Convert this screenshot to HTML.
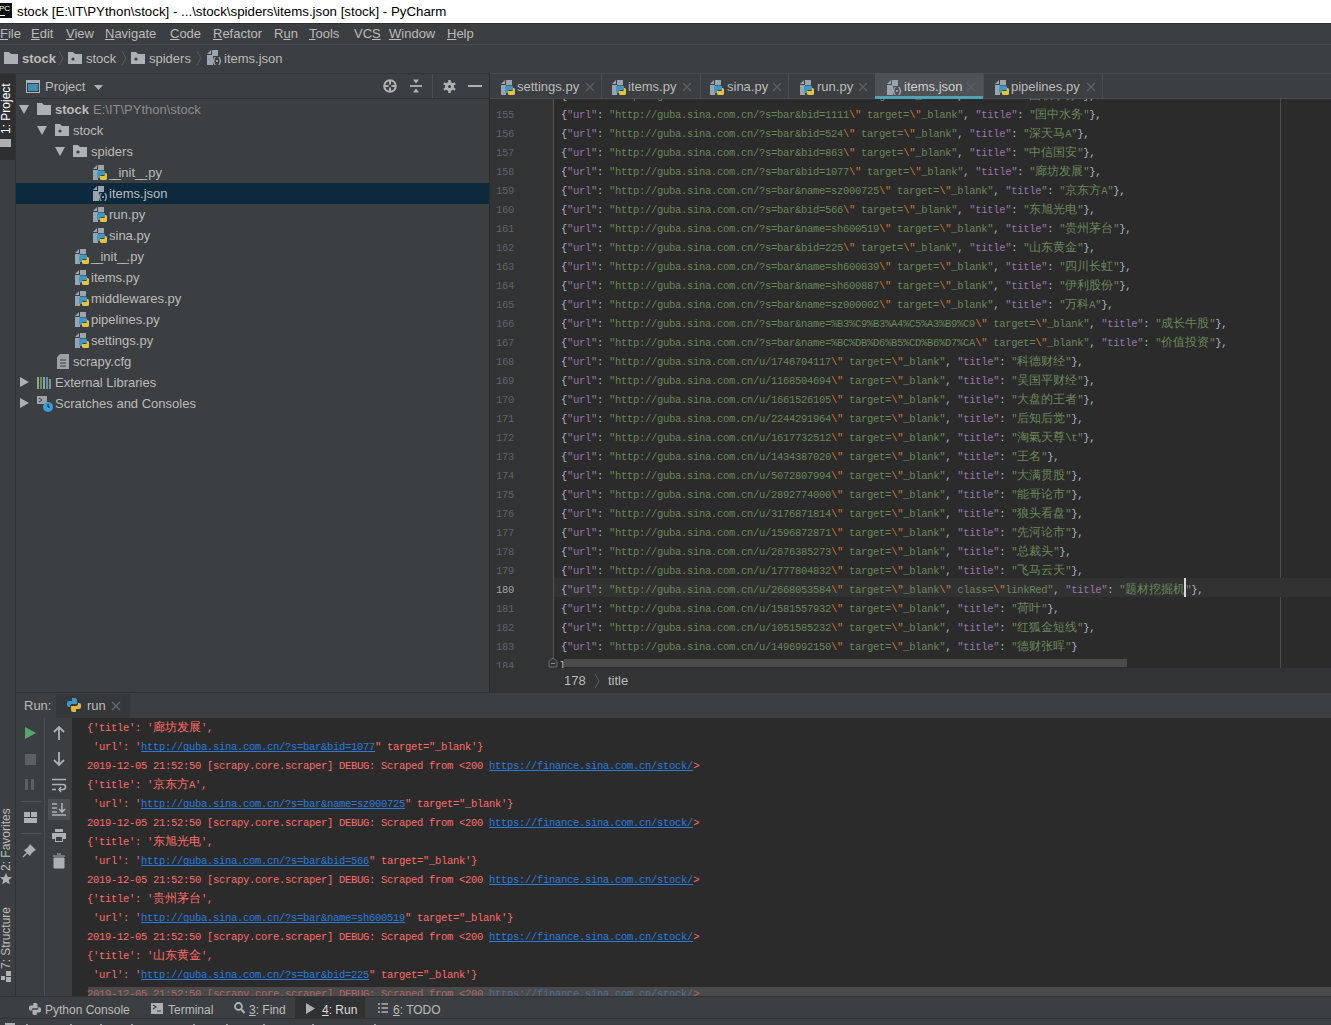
<!DOCTYPE html><html><head><meta charset="utf-8"><style>
*{margin:0;padding:0;box-sizing:border-box}
html,body{width:1331px;height:1025px;overflow:hidden;background:#3c3f41;font-family:"Liberation Sans",sans-serif;color:#bbbbbb}
.a{position:absolute}
.ui{font-size:13px;white-space:nowrap;line-height:16px}
.code{font-family:"Liberation Mono",monospace;font-size:10.5px;letter-spacing:-0.3px;white-space:pre;line-height:19px;position:absolute}
.k{color:#9876aa}.s{color:#6a8759}.e{color:#cc7832}.p{color:#a9b7c6}
.r{color:#ff6b68}.lnk{color:#287bde;text-decoration:underline;text-decoration-skip-ink:none}
.ln{font-family:"Liberation Mono",monospace;font-size:10.5px;letter-spacing:-0.3px;color:#606366;position:absolute;line-height:19px;white-space:pre}
u{text-decoration:underline}
.cj{display:inline-block;width:12px;letter-spacing:0;font-size:12px;text-align:center;line-height:19px;vertical-align:top}
svg{position:absolute;overflow:visible}
</style></head><body>
<div class="a" style="left:0px;top:0px;width:1331px;height:23px;background:#ffffff;"></div>
<div class="a" style="left:0px;top:3px;width:12px;height:15px;background:#0a1410;"></div>
<div class="a" style="left:0px;top:15px;width:5px;height:1px;background:#ffffff;"></div>
<div class="a" style="left:-1px;top:5px;font:8px/8px 'Liberation Sans';color:#fff">PC</div>
<div class="a ui" style="left:17px;top:4px;color:#000;font-size:13.3px">stock [E:\IT\PYthon\stock] - ...\stock\spiders\items.json [stock] - PyCharm</div>
<div class="a" style="left:0px;top:23px;width:1331px;height:21px;background:#3c3f41;"></div>
<div class="a" style="left:0px;top:23px;width:1331px;height:1px;background:#2e3032;"></div>
<div class="a" style="left:0px;top:41px;width:1331px;height:1px;background:#393b3d;"></div>
<div class="a ui" style="left:0px;top:26px;"><u>F</u>ile</div>
<div class="a ui" style="left:31px;top:26px;"><u>E</u>dit</div>
<div class="a ui" style="left:66px;top:26px;"><u>V</u>iew</div>
<div class="a ui" style="left:105px;top:26px;"><u>N</u>avigate</div>
<div class="a ui" style="left:170px;top:26px;"><u>C</u>ode</div>
<div class="a ui" style="left:213px;top:26px;"><u>R</u>efactor</div>
<div class="a ui" style="left:274px;top:26px;">R<u>u</u>n</div>
<div class="a ui" style="left:309px;top:26px;"><u>T</u>ools</div>
<div class="a ui" style="left:354px;top:26px;">VC<u>S</u></div>
<div class="a ui" style="left:389px;top:26px;"><u>W</u>indow</div>
<div class="a ui" style="left:447px;top:26px;"><u>H</u>elp</div>
<div class="a" style="left:0px;top:44px;width:1331px;height:1px;background:#4a4d4f;"></div>
<div class="a" style="left:0px;top:45px;width:1331px;height:27px;background:#3c3f41;"></div>
<svg style="left:4px;top:52px" width="14" height="12" viewBox="0 0 14 12"><path d="M0 0h5l2 2h7v10H0z" fill="#aeb1b3"/></svg>
<div class="a ui" style="left:22px;top:51px;"><b>stock</b></div>
<svg style="left:59px;top:51px" width="5" height="14" viewBox="0 0 5 14"><path d="M0 0l4 7-4 7" fill="none" stroke="#5a5d5f" stroke-width="1"/></svg>
<svg style="left:68px;top:52px" width="14" height="12" viewBox="0 0 14 12"><path d="M0 0h5l2 2h7v10H0z" fill="#aeb1b3"/><circle cx="5" cy="7" r="1.6" fill="#3c3f41"/></svg>
<div class="a ui" style="left:86px;top:51px;">stock</div>
<svg style="left:122px;top:51px" width="5" height="14" viewBox="0 0 5 14"><path d="M0 0l4 7-4 7" fill="none" stroke="#5a5d5f" stroke-width="1"/></svg>
<svg style="left:131px;top:52px" width="14" height="12" viewBox="0 0 14 12"><path d="M0 0h5l2 2h7v10H0z" fill="#aeb1b3"/><circle cx="5" cy="7" r="1.6" fill="#3c3f41"/></svg>
<div class="a ui" style="left:149px;top:51px;">spiders</div>
<svg style="left:197px;top:51px" width="5" height="14" viewBox="0 0 5 14"><path d="M0 0l4 7-4 7" fill="none" stroke="#5a5d5f" stroke-width="1"/></svg>
<svg style="left:207px;top:50px" width="14" height="15" viewBox="0 0 14 15"><path d="M0 4L4 0v4z" fill="#9aa4ad"/><path d="M5 0h6v6H6v9H0V5h5z" fill="#9aa4ad"/><path d="M8.5 7.5q-1.5 0-1.5 1.5v1q0 1-1 1 1 0 1 1v1q0 1.5 1.5 1.5M11.5 7.5q1.5 0 1.5 1.5v1q0 1 1 1-1 0-1 1v1q0 1.5-1.5 1.5" fill="none" stroke="#afb4b8" stroke-width="1.2"/><circle cx="10" cy="11" r="1" fill="#afb4b8"/></svg>
<div class="a ui" style="left:224px;top:51px;">items.json</div>
<div class="a" style="left:0px;top:73px;width:16px;height:925px;background:#3c3f41;"></div>
<div class="a" style="left:15px;top:73px;width:1px;height:925px;background:#323232;"></div>
<div class="a" style="left:0px;top:73px;width:15px;height:87px;background:#2d2f31;"></div>
<div class="a ui" style="left:-26px;top:94px;width:64px;transform:rotate(-90deg);font-size:12px;color:#ffffff">1: Project</div>
<div class="a" style="left:0px;top:139px;width:11px;height:8px;background:#aeb1b3;"></div>
<div class="a ui" style="left:-32px;top:825px;width:76px;transform:rotate(-90deg);font-size:12px">2: Favorites</div>
<svg style="left:0;top:873px" width="12" height="12" viewBox="0 0 12 12"><path d="M6 0l1.8 3.9 4.2.4-3.2 2.8 1 4.1L6 9 2.2 11.2l1-4.1L0 4.3l4.2-.4z" fill="#aeb1b3"/></svg>
<div class="a ui" style="left:-32px;top:923px;width:76px;transform:rotate(-90deg);font-size:12px">7: Structure</div>
<div class="a" style="left:1px;top:976px;width:4px;height:4px;background:#aeb1b3;"></div>
<div class="a" style="left:6px;top:971px;width:5px;height:5px;background:#aeb1b3;"></div>
<div class="a" style="left:6px;top:977px;width:5px;height:5px;background:#aeb1b3;"></div>
<div class="a" style="left:16px;top:73px;width:473px;height:620px;background:#3c3f41;"></div>
<div class="a" style="left:0px;top:73px;width:489px;height:1px;background:#333537;"></div>
<div class="a" style="left:16px;top:98px;width:473px;height:1px;background:#323232;"></div>
<svg style="left:26px;top:80px" width="14" height="13" viewBox="0 0 14 13"><rect x="0.5" y="0.5" width="13" height="12" fill="none" stroke="#a9b4bc"/><rect x="1" y="1" width="12" height="2" fill="#a9b4bc"/><rect x="2" y="4" width="10" height="7" fill="#3d8db5"/></svg>
<div class="a ui" style="left:45px;top:79px;">Project</div>
<svg style="left:94px;top:85px" width="9" height="5" viewBox="0 0 9 5"><path d="M0 0h9L4.5 5z" fill="#afb1b3"/></svg>
<svg style="left:383px;top:79px" width="14" height="14" viewBox="0 0 14 14"><circle cx="7" cy="7" r="5.8" fill="none" stroke="#afb1b3" stroke-width="2"/><path d="M7 1.5v4M7 8.5v4M1.5 7h4M8.5 7h4" stroke="#afb1b3" stroke-width="2"/></svg>
<svg style="left:410px;top:79px" width="12" height="14" viewBox="0 0 12 14"><path d="M3 0.5h6L6 4.5z M3 13.5h6L6 9.5z" fill="#afb1b3"/><path d="M0 7h12" stroke="#afb1b3" stroke-width="1.8"/></svg>
<div class="a" style="left:432px;top:74px;width:1px;height:24px;background:#4b4e50;"></div>
<svg style="left:442.5px;top:79.5px" width="13" height="13" viewBox="0 0 13 13"><rect x="5.25" y="0" width="2.5" height="3.5" fill="#afb1b3" transform="rotate(0 6.5 6.5)"/><rect x="5.25" y="0" width="2.5" height="3.5" fill="#afb1b3" transform="rotate(60 6.5 6.5)"/><rect x="5.25" y="0" width="2.5" height="3.5" fill="#afb1b3" transform="rotate(120 6.5 6.5)"/><rect x="5.25" y="0" width="2.5" height="3.5" fill="#afb1b3" transform="rotate(180 6.5 6.5)"/><rect x="5.25" y="0" width="2.5" height="3.5" fill="#afb1b3" transform="rotate(240 6.5 6.5)"/><rect x="5.25" y="0" width="2.5" height="3.5" fill="#afb1b3" transform="rotate(300 6.5 6.5)"/><circle cx="6.5" cy="6.5" r="4.5" fill="#afb1b3"/><circle cx="6.5" cy="6.5" r="1.6" fill="#3c3f41"/></svg>
<div class="a" style="left:468px;top:85px;width:14px;height:2px;background:#afb1b3;"></div>
<div class="a" style="left:16px;top:183px;width:473px;height:21px;background:#0d293e;"></div>
<svg style="left:19px;top:105px" width="10" height="9" viewBox="0 0 10 9"><path d="M0 0h10L5 9z" fill="#afb1b3"/></svg>
<svg style="left:37px;top:103px" width="14" height="12" viewBox="0 0 14 12"><path d="M0 0h5l2 2h7v10H0z" fill="#aeb1b3"/></svg>
<div class="a ui" style="left:55px;top:102px;"><b>stock</b></div>
<div class="a ui" style="left:93px;top:102px;color:#8c8c8c">E:\IT\PYthon\stock</div>
<svg style="left:37px;top:126px" width="10" height="9" viewBox="0 0 10 9"><path d="M0 0h10L5 9z" fill="#afb1b3"/></svg>
<svg style="left:55px;top:124px" width="14" height="12" viewBox="0 0 14 12"><path d="M0 0h5l2 2h7v10H0z" fill="#aeb1b3"/><circle cx="5" cy="7" r="1.6" fill="#3c3f41"/></svg>
<div class="a ui" style="left:73px;top:123px;">stock</div>
<svg style="left:55px;top:147px" width="10" height="9" viewBox="0 0 10 9"><path d="M0 0h10L5 9z" fill="#afb1b3"/></svg>
<svg style="left:73px;top:145px" width="14" height="12" viewBox="0 0 14 12"><path d="M0 0h5l2 2h7v10H0z" fill="#aeb1b3"/><circle cx="5" cy="7" r="1.6" fill="#3c3f41"/></svg>
<div class="a ui" style="left:91px;top:144px;">spiders</div>
<svg style="left:93px;top:165px" width="14" height="15" viewBox="0 0 14 15"><path d="M0 4L4 0v4z" fill="#9aa4ad"/><path d="M5 0h6v5H5v10H0V5h5z" fill="#9aa4ad"/><path d="M6 5.5h4.5A1.5 1.5 0 0 1 12 7v3H8.5A1.5 1.5 0 0 0 7 11.5V13H5.5A1.5 1.5 0 0 1 4 11.5V7.5a2 2 0 0 1 2-2z" fill="#3f97c6"/><path d="M12.5 15H8.5A1.5 1.5 0 0 1 7 13.5V11h3.5A1.5 1.5 0 0 0 12 9.5V8h.5A1.5 1.5 0 0 1 14 9.5v4a1.5 1.5 0 0 1-1.5 1.5z" fill="#e5c33e"/></svg>
<div class="a ui" style="left:109px;top:165px;"><span style="letter-spacing:-2.5px">_</span><span style="letter-spacing:-2.5px">_</span>init<span style="letter-spacing:-2.5px">_</span><span style="letter-spacing:-2.5px">_</span>.py</div>
<svg style="left:93px;top:186px" width="14" height="15" viewBox="0 0 14 15"><path d="M0 4L4 0v4z" fill="#9aa4ad"/><path d="M5 0h6v6H6v9H0V5h5z" fill="#9aa4ad"/><path d="M8.5 7.5q-1.5 0-1.5 1.5v1q0 1-1 1 1 0 1 1v1q0 1.5 1.5 1.5M11.5 7.5q1.5 0 1.5 1.5v1q0 1 1 1-1 0-1 1v1q0 1.5-1.5 1.5" fill="none" stroke="#afb4b8" stroke-width="1.2"/><circle cx="10" cy="11" r="1" fill="#afb4b8"/></svg>
<div class="a ui" style="left:109px;top:186px;">items.json</div>
<svg style="left:93px;top:207px" width="14" height="15" viewBox="0 0 14 15"><path d="M0 4L4 0v4z" fill="#9aa4ad"/><path d="M5 0h6v5H5v10H0V5h5z" fill="#9aa4ad"/><path d="M6 5.5h4.5A1.5 1.5 0 0 1 12 7v3H8.5A1.5 1.5 0 0 0 7 11.5V13H5.5A1.5 1.5 0 0 1 4 11.5V7.5a2 2 0 0 1 2-2z" fill="#3f97c6"/><path d="M12.5 15H8.5A1.5 1.5 0 0 1 7 13.5V11h3.5A1.5 1.5 0 0 0 12 9.5V8h.5A1.5 1.5 0 0 1 14 9.5v4a1.5 1.5 0 0 1-1.5 1.5z" fill="#e5c33e"/></svg>
<div class="a ui" style="left:109px;top:207px;">run.py</div>
<svg style="left:93px;top:228px" width="14" height="15" viewBox="0 0 14 15"><path d="M0 4L4 0v4z" fill="#9aa4ad"/><path d="M5 0h6v5H5v10H0V5h5z" fill="#9aa4ad"/><path d="M6 5.5h4.5A1.5 1.5 0 0 1 12 7v3H8.5A1.5 1.5 0 0 0 7 11.5V13H5.5A1.5 1.5 0 0 1 4 11.5V7.5a2 2 0 0 1 2-2z" fill="#3f97c6"/><path d="M12.5 15H8.5A1.5 1.5 0 0 1 7 13.5V11h3.5A1.5 1.5 0 0 0 12 9.5V8h.5A1.5 1.5 0 0 1 14 9.5v4a1.5 1.5 0 0 1-1.5 1.5z" fill="#e5c33e"/></svg>
<div class="a ui" style="left:109px;top:228px;">sina.py</div>
<svg style="left:75px;top:249px" width="14" height="15" viewBox="0 0 14 15"><path d="M0 4L4 0v4z" fill="#9aa4ad"/><path d="M5 0h6v5H5v10H0V5h5z" fill="#9aa4ad"/><path d="M6 5.5h4.5A1.5 1.5 0 0 1 12 7v3H8.5A1.5 1.5 0 0 0 7 11.5V13H5.5A1.5 1.5 0 0 1 4 11.5V7.5a2 2 0 0 1 2-2z" fill="#3f97c6"/><path d="M12.5 15H8.5A1.5 1.5 0 0 1 7 13.5V11h3.5A1.5 1.5 0 0 0 12 9.5V8h.5A1.5 1.5 0 0 1 14 9.5v4a1.5 1.5 0 0 1-1.5 1.5z" fill="#e5c33e"/></svg>
<div class="a ui" style="left:91px;top:249px;"><span style="letter-spacing:-2.5px">_</span><span style="letter-spacing:-2.5px">_</span>init<span style="letter-spacing:-2.5px">_</span><span style="letter-spacing:-2.5px">_</span>.py</div>
<svg style="left:75px;top:270px" width="14" height="15" viewBox="0 0 14 15"><path d="M0 4L4 0v4z" fill="#9aa4ad"/><path d="M5 0h6v5H5v10H0V5h5z" fill="#9aa4ad"/><path d="M6 5.5h4.5A1.5 1.5 0 0 1 12 7v3H8.5A1.5 1.5 0 0 0 7 11.5V13H5.5A1.5 1.5 0 0 1 4 11.5V7.5a2 2 0 0 1 2-2z" fill="#3f97c6"/><path d="M12.5 15H8.5A1.5 1.5 0 0 1 7 13.5V11h3.5A1.5 1.5 0 0 0 12 9.5V8h.5A1.5 1.5 0 0 1 14 9.5v4a1.5 1.5 0 0 1-1.5 1.5z" fill="#e5c33e"/></svg>
<div class="a ui" style="left:91px;top:270px;">items.py</div>
<svg style="left:75px;top:291px" width="14" height="15" viewBox="0 0 14 15"><path d="M0 4L4 0v4z" fill="#9aa4ad"/><path d="M5 0h6v5H5v10H0V5h5z" fill="#9aa4ad"/><path d="M6 5.5h4.5A1.5 1.5 0 0 1 12 7v3H8.5A1.5 1.5 0 0 0 7 11.5V13H5.5A1.5 1.5 0 0 1 4 11.5V7.5a2 2 0 0 1 2-2z" fill="#3f97c6"/><path d="M12.5 15H8.5A1.5 1.5 0 0 1 7 13.5V11h3.5A1.5 1.5 0 0 0 12 9.5V8h.5A1.5 1.5 0 0 1 14 9.5v4a1.5 1.5 0 0 1-1.5 1.5z" fill="#e5c33e"/></svg>
<div class="a ui" style="left:91px;top:291px;">middlewares.py</div>
<svg style="left:75px;top:312px" width="14" height="15" viewBox="0 0 14 15"><path d="M0 4L4 0v4z" fill="#9aa4ad"/><path d="M5 0h6v5H5v10H0V5h5z" fill="#9aa4ad"/><path d="M6 5.5h4.5A1.5 1.5 0 0 1 12 7v3H8.5A1.5 1.5 0 0 0 7 11.5V13H5.5A1.5 1.5 0 0 1 4 11.5V7.5a2 2 0 0 1 2-2z" fill="#3f97c6"/><path d="M12.5 15H8.5A1.5 1.5 0 0 1 7 13.5V11h3.5A1.5 1.5 0 0 0 12 9.5V8h.5A1.5 1.5 0 0 1 14 9.5v4a1.5 1.5 0 0 1-1.5 1.5z" fill="#e5c33e"/></svg>
<div class="a ui" style="left:91px;top:312px;">pipelines.py</div>
<svg style="left:75px;top:333px" width="14" height="15" viewBox="0 0 14 15"><path d="M0 4L4 0v4z" fill="#9aa4ad"/><path d="M5 0h6v5H5v10H0V5h5z" fill="#9aa4ad"/><path d="M6 5.5h4.5A1.5 1.5 0 0 1 12 7v3H8.5A1.5 1.5 0 0 0 7 11.5V13H5.5A1.5 1.5 0 0 1 4 11.5V7.5a2 2 0 0 1 2-2z" fill="#3f97c6"/><path d="M12.5 15H8.5A1.5 1.5 0 0 1 7 13.5V11h3.5A1.5 1.5 0 0 0 12 9.5V8h.5A1.5 1.5 0 0 1 14 9.5v4a1.5 1.5 0 0 1-1.5 1.5z" fill="#e5c33e"/></svg>
<div class="a ui" style="left:91px;top:333px;">settings.py</div>
<svg style="left:57px;top:354px" width="12" height="15" viewBox="0 0 12 15"><path d="M0 3l3-3h9v15H0z" fill="#9da0a4"/><path d="M3 6h6M3 9h6M3 12h6" stroke="#3c3f41" stroke-width="1"/></svg>
<div class="a ui" style="left:73px;top:354px;">scrapy.cfg</div>
<svg style="left:20px;top:377px" width="9" height="10" viewBox="0 0 9 10"><path d="M0 0l9 5-9 5z" fill="#afb1b3"/></svg>
<svg style="left:37px;top:377px" width="14" height="12" viewBox="0 0 14 12"><path d="M1 0v12" stroke="#b5b5b5" stroke-width="1.6"/><path d="M4 0v12" stroke="#62b543" stroke-width="1.6"/><path d="M7 0v12" stroke="#c4a9c4" stroke-width="1.6"/><path d="M10 0v12" stroke="#40b6e0" stroke-width="1.6"/><path d="M13 2v10" stroke="#aeb1b3" stroke-width="1.4"/></svg>
<div class="a ui" style="left:55px;top:375px;">External Libraries</div>
<svg style="left:20px;top:398px" width="9" height="10" viewBox="0 0 9 10"><path d="M0 0l9 5-9 5z" fill="#afb1b3"/></svg>
<svg style="left:37px;top:396px" width="16" height="16" viewBox="0 0 16 16"><path d="M0 0h10v8H0z" fill="#9da0a4"/><path d="M2 2l3 2-3 2" stroke="#3c3f41" fill="none"/><circle cx="11" cy="11" r="5" fill="#3d9bd8"/><path d="M11 8v3h2" stroke="#1e1e1e" fill="none"/></svg>
<div class="a ui" style="left:55px;top:396px;">Scratches and Consoles</div>
<div class="a" style="left:489px;top:73px;width:1px;height:620px;background:#2b2b2b;"></div>
<div class="a" style="left:490px;top:73px;width:841px;height:26px;background:#3c3f41;"></div>
<div class="a" style="left:490px;top:73px;width:841px;height:1px;background:#47494b;"></div>
<div class="a" style="left:490px;top:98px;width:841px;height:1px;background:#4a4c4e;"></div>
<div class="a" style="left:601px;top:74px;width:1px;height:24px;background:#4a4c4e;"></div>
<svg style="left:501px;top:80px" width="14" height="15" viewBox="0 0 14 15"><path d="M0 4L4 0v4z" fill="#9aa4ad"/><path d="M5 0h6v5H5v10H0V5h5z" fill="#9aa4ad"/><path d="M6 5.5h4.5A1.5 1.5 0 0 1 12 7v3H8.5A1.5 1.5 0 0 0 7 11.5V13H5.5A1.5 1.5 0 0 1 4 11.5V7.5a2 2 0 0 1 2-2z" fill="#3f97c6"/><path d="M12.5 15H8.5A1.5 1.5 0 0 1 7 13.5V11h3.5A1.5 1.5 0 0 0 12 9.5V8h.5A1.5 1.5 0 0 1 14 9.5v4a1.5 1.5 0 0 1-1.5 1.5z" fill="#e5c33e"/></svg>
<div class="a ui" style="left:517px;top:79px;color:#bbbbbb">settings.py</div>
<svg style="left:586px;top:83px" width="8" height="8" viewBox="0 0 8 8"><path d="M0 0l8 8M8 0L0 8" stroke="#5d6062" stroke-width="1.3"/></svg>
<div class="a" style="left:700px;top:74px;width:1px;height:24px;background:#4a4c4e;"></div>
<svg style="left:612px;top:80px" width="14" height="15" viewBox="0 0 14 15"><path d="M0 4L4 0v4z" fill="#9aa4ad"/><path d="M5 0h6v5H5v10H0V5h5z" fill="#9aa4ad"/><path d="M6 5.5h4.5A1.5 1.5 0 0 1 12 7v3H8.5A1.5 1.5 0 0 0 7 11.5V13H5.5A1.5 1.5 0 0 1 4 11.5V7.5a2 2 0 0 1 2-2z" fill="#3f97c6"/><path d="M12.5 15H8.5A1.5 1.5 0 0 1 7 13.5V11h3.5A1.5 1.5 0 0 0 12 9.5V8h.5A1.5 1.5 0 0 1 14 9.5v4a1.5 1.5 0 0 1-1.5 1.5z" fill="#e5c33e"/></svg>
<div class="a ui" style="left:628px;top:79px;color:#bbbbbb">items.py</div>
<svg style="left:683px;top:83px" width="8" height="8" viewBox="0 0 8 8"><path d="M0 0l8 8M8 0L0 8" stroke="#5d6062" stroke-width="1.3"/></svg>
<div class="a" style="left:788px;top:74px;width:1px;height:24px;background:#4a4c4e;"></div>
<svg style="left:710px;top:80px" width="14" height="15" viewBox="0 0 14 15"><path d="M0 4L4 0v4z" fill="#9aa4ad"/><path d="M5 0h6v5H5v10H0V5h5z" fill="#9aa4ad"/><path d="M6 5.5h4.5A1.5 1.5 0 0 1 12 7v3H8.5A1.5 1.5 0 0 0 7 11.5V13H5.5A1.5 1.5 0 0 1 4 11.5V7.5a2 2 0 0 1 2-2z" fill="#3f97c6"/><path d="M12.5 15H8.5A1.5 1.5 0 0 1 7 13.5V11h3.5A1.5 1.5 0 0 0 12 9.5V8h.5A1.5 1.5 0 0 1 14 9.5v4a1.5 1.5 0 0 1-1.5 1.5z" fill="#e5c33e"/></svg>
<div class="a ui" style="left:727px;top:79px;color:#bbbbbb">sina.py</div>
<svg style="left:773px;top:83px" width="8" height="8" viewBox="0 0 8 8"><path d="M0 0l8 8M8 0L0 8" stroke="#5d6062" stroke-width="1.3"/></svg>
<div class="a" style="left:875px;top:74px;width:1px;height:24px;background:#4a4c4e;"></div>
<svg style="left:800px;top:80px" width="14" height="15" viewBox="0 0 14 15"><path d="M0 4L4 0v4z" fill="#9aa4ad"/><path d="M5 0h6v5H5v10H0V5h5z" fill="#9aa4ad"/><path d="M6 5.5h4.5A1.5 1.5 0 0 1 12 7v3H8.5A1.5 1.5 0 0 0 7 11.5V13H5.5A1.5 1.5 0 0 1 4 11.5V7.5a2 2 0 0 1 2-2z" fill="#3f97c6"/><path d="M12.5 15H8.5A1.5 1.5 0 0 1 7 13.5V11h3.5A1.5 1.5 0 0 0 12 9.5V8h.5A1.5 1.5 0 0 1 14 9.5v4a1.5 1.5 0 0 1-1.5 1.5z" fill="#e5c33e"/></svg>
<div class="a ui" style="left:817px;top:79px;color:#bbbbbb">run.py</div>
<svg style="left:859px;top:83px" width="8" height="8" viewBox="0 0 8 8"><path d="M0 0l8 8M8 0L0 8" stroke="#5d6062" stroke-width="1.3"/></svg>
<div class="a" style="left:875px;top:73px;width:108px;height:26px;background:#4e5254;"></div>
<div class="a" style="left:875px;top:96px;width:108px;height:3px;background:#4ea3b6;"></div>
<div class="a" style="left:983px;top:74px;width:1px;height:24px;background:#4a4c4e;"></div>
<svg style="left:887px;top:80px" width="14" height="15" viewBox="0 0 14 15"><path d="M0 4L4 0v4z" fill="#9aa4ad"/><path d="M5 0h6v6H6v9H0V5h5z" fill="#9aa4ad"/><path d="M8.5 7.5q-1.5 0-1.5 1.5v1q0 1-1 1 1 0 1 1v1q0 1.5 1.5 1.5M11.5 7.5q1.5 0 1.5 1.5v1q0 1 1 1-1 0-1 1v1q0 1.5-1.5 1.5" fill="none" stroke="#afb4b8" stroke-width="1.2"/><circle cx="10" cy="11" r="1" fill="#afb4b8"/></svg>
<div class="a ui" style="left:904px;top:79px;color:#d0d0d0">items.json</div>
<svg style="left:967px;top:83px" width="8" height="8" viewBox="0 0 8 8"><path d="M0 0l8 8M8 0L0 8" stroke="#5d6062" stroke-width="1.3"/></svg>
<div class="a" style="left:1102px;top:74px;width:1px;height:24px;background:#4a4c4e;"></div>
<svg style="left:995px;top:80px" width="14" height="15" viewBox="0 0 14 15"><path d="M0 4L4 0v4z" fill="#9aa4ad"/><path d="M5 0h6v5H5v10H0V5h5z" fill="#9aa4ad"/><path d="M6 5.5h4.5A1.5 1.5 0 0 1 12 7v3H8.5A1.5 1.5 0 0 0 7 11.5V13H5.5A1.5 1.5 0 0 1 4 11.5V7.5a2 2 0 0 1 2-2z" fill="#3f97c6"/><path d="M12.5 15H8.5A1.5 1.5 0 0 1 7 13.5V11h3.5A1.5 1.5 0 0 0 12 9.5V8h.5A1.5 1.5 0 0 1 14 9.5v4a1.5 1.5 0 0 1-1.5 1.5z" fill="#e5c33e"/></svg>
<div class="a ui" style="left:1011px;top:79px;color:#bbbbbb">pipelines.py</div>
<svg style="left:1087px;top:83px" width="8" height="8" viewBox="0 0 8 8"><path d="M0 0l8 8M8 0L0 8" stroke="#5d6062" stroke-width="1.3"/></svg>
<div class="a" style="left:490px;top:99px;width:841px;height:569px;background:#2b2b2b;"></div>
<div class="a" style="left:490px;top:99px;width:63px;height:569px;background:#313335;"></div>
<div class="a" style="left:553px;top:99px;width:1px;height:569px;background:#555555;"></div>
<div class="a" style="left:1280px;top:99px;width:1px;height:569px;background:#4c4c4c;"></div>
<div class="a" style="left:1286px;top:99px;width:1px;height:569px;background:#303030;"></div>
<div class="a" style="left:554px;top:578px;width:777px;height:19px;background:#323232;"></div>
<div class="a" style="left:490px;top:99px;width:841px;height:569px;overflow:hidden">
<div class="ln" style="left:6px;top:-12px;color:#606366">154</div>
<div class="code" style="left:71px;top:-12px"><span class="p">{</span><span class="k">&quot;url&quot;</span><span class="p">: </span><span class="s">&quot;http://guba.sina.com.cn/?s=bar&amp;bid=???</span><span class="e">\&quot;</span><span class="s"> target=</span><span class="e">\&quot;</span><span class="s">_blank&quot;</span><span class="p">, </span><span class="k">&quot;title&quot;</span><span class="p">: </span><span class="s">&quot;<span class="cj">国</span><span class="cj">联</span><span class="cj">水</span><span class="cj">务</span>&quot;</span><span class="p">},</span></div>
<div class="ln" style="left:6px;top:7px;color:#606366">155</div>
<div class="code" style="left:71px;top:7px"><span class="p">{</span><span class="k">&quot;url&quot;</span><span class="p">: </span><span class="s">&quot;http://guba.sina.com.cn/?s=bar&amp;bid=1111</span><span class="e">\&quot;</span><span class="s"> target=</span><span class="e">\&quot;</span><span class="s">_blank&quot;</span><span class="p">, </span><span class="k">&quot;title&quot;</span><span class="p">: </span><span class="s">&quot;<span class="cj">国</span><span class="cj">中</span><span class="cj">水</span><span class="cj">务</span>&quot;</span><span class="p">},</span></div>
<div class="ln" style="left:6px;top:26px;color:#606366">156</div>
<div class="code" style="left:71px;top:26px"><span class="p">{</span><span class="k">&quot;url&quot;</span><span class="p">: </span><span class="s">&quot;http://guba.sina.com.cn/?s=bar&amp;bid=524</span><span class="e">\&quot;</span><span class="s"> target=</span><span class="e">\&quot;</span><span class="s">_blank&quot;</span><span class="p">, </span><span class="k">&quot;title&quot;</span><span class="p">: </span><span class="s">&quot;<span class="cj">深</span><span class="cj">天</span><span class="cj">马</span>A&quot;</span><span class="p">},</span></div>
<div class="ln" style="left:6px;top:45px;color:#606366">157</div>
<div class="code" style="left:71px;top:45px"><span class="p">{</span><span class="k">&quot;url&quot;</span><span class="p">: </span><span class="s">&quot;http://guba.sina.com.cn/?s=bar&amp;bid=863</span><span class="e">\&quot;</span><span class="s"> target=</span><span class="e">\&quot;</span><span class="s">_blank&quot;</span><span class="p">, </span><span class="k">&quot;title&quot;</span><span class="p">: </span><span class="s">&quot;<span class="cj">中</span><span class="cj">信</span><span class="cj">国</span><span class="cj">安</span>&quot;</span><span class="p">},</span></div>
<div class="ln" style="left:6px;top:64px;color:#606366">158</div>
<div class="code" style="left:71px;top:64px"><span class="p">{</span><span class="k">&quot;url&quot;</span><span class="p">: </span><span class="s">&quot;http://guba.sina.com.cn/?s=bar&amp;bid=1077</span><span class="e">\&quot;</span><span class="s"> target=</span><span class="e">\&quot;</span><span class="s">_blank&quot;</span><span class="p">, </span><span class="k">&quot;title&quot;</span><span class="p">: </span><span class="s">&quot;<span class="cj">廊</span><span class="cj">坊</span><span class="cj">发</span><span class="cj">展</span>&quot;</span><span class="p">},</span></div>
<div class="ln" style="left:6px;top:83px;color:#606366">159</div>
<div class="code" style="left:71px;top:83px"><span class="p">{</span><span class="k">&quot;url&quot;</span><span class="p">: </span><span class="s">&quot;http://guba.sina.com.cn/?s=bar&amp;name=sz000725</span><span class="e">\&quot;</span><span class="s"> target=</span><span class="e">\&quot;</span><span class="s">_blank&quot;</span><span class="p">, </span><span class="k">&quot;title&quot;</span><span class="p">: </span><span class="s">&quot;<span class="cj">京</span><span class="cj">东</span><span class="cj">方</span>A&quot;</span><span class="p">},</span></div>
<div class="ln" style="left:6px;top:102px;color:#606366">160</div>
<div class="code" style="left:71px;top:102px"><span class="p">{</span><span class="k">&quot;url&quot;</span><span class="p">: </span><span class="s">&quot;http://guba.sina.com.cn/?s=bar&amp;bid=566</span><span class="e">\&quot;</span><span class="s"> target=</span><span class="e">\&quot;</span><span class="s">_blank&quot;</span><span class="p">, </span><span class="k">&quot;title&quot;</span><span class="p">: </span><span class="s">&quot;<span class="cj">东</span><span class="cj">旭</span><span class="cj">光</span><span class="cj">电</span>&quot;</span><span class="p">},</span></div>
<div class="ln" style="left:6px;top:121px;color:#606366">161</div>
<div class="code" style="left:71px;top:121px"><span class="p">{</span><span class="k">&quot;url&quot;</span><span class="p">: </span><span class="s">&quot;http://guba.sina.com.cn/?s=bar&amp;name=sh600519</span><span class="e">\&quot;</span><span class="s"> target=</span><span class="e">\&quot;</span><span class="s">_blank&quot;</span><span class="p">, </span><span class="k">&quot;title&quot;</span><span class="p">: </span><span class="s">&quot;<span class="cj">贵</span><span class="cj">州</span><span class="cj">茅</span><span class="cj">台</span>&quot;</span><span class="p">},</span></div>
<div class="ln" style="left:6px;top:140px;color:#606366">162</div>
<div class="code" style="left:71px;top:140px"><span class="p">{</span><span class="k">&quot;url&quot;</span><span class="p">: </span><span class="s">&quot;http://guba.sina.com.cn/?s=bar&amp;bid=225</span><span class="e">\&quot;</span><span class="s"> target=</span><span class="e">\&quot;</span><span class="s">_blank&quot;</span><span class="p">, </span><span class="k">&quot;title&quot;</span><span class="p">: </span><span class="s">&quot;<span class="cj">山</span><span class="cj">东</span><span class="cj">黄</span><span class="cj">金</span>&quot;</span><span class="p">},</span></div>
<div class="ln" style="left:6px;top:159px;color:#606366">163</div>
<div class="code" style="left:71px;top:159px"><span class="p">{</span><span class="k">&quot;url&quot;</span><span class="p">: </span><span class="s">&quot;http://guba.sina.com.cn/?s=bar&amp;name=sh600839</span><span class="e">\&quot;</span><span class="s"> target=</span><span class="e">\&quot;</span><span class="s">_blank&quot;</span><span class="p">, </span><span class="k">&quot;title&quot;</span><span class="p">: </span><span class="s">&quot;<span class="cj">四</span><span class="cj">川</span><span class="cj">长</span><span class="cj">虹</span>&quot;</span><span class="p">},</span></div>
<div class="ln" style="left:6px;top:178px;color:#606366">164</div>
<div class="code" style="left:71px;top:178px"><span class="p">{</span><span class="k">&quot;url&quot;</span><span class="p">: </span><span class="s">&quot;http://guba.sina.com.cn/?s=bar&amp;name=sh600887</span><span class="e">\&quot;</span><span class="s"> target=</span><span class="e">\&quot;</span><span class="s">_blank&quot;</span><span class="p">, </span><span class="k">&quot;title&quot;</span><span class="p">: </span><span class="s">&quot;<span class="cj">伊</span><span class="cj">利</span><span class="cj">股</span><span class="cj">份</span>&quot;</span><span class="p">},</span></div>
<div class="ln" style="left:6px;top:197px;color:#606366">165</div>
<div class="code" style="left:71px;top:197px"><span class="p">{</span><span class="k">&quot;url&quot;</span><span class="p">: </span><span class="s">&quot;http://guba.sina.com.cn/?s=bar&amp;name=sz000002</span><span class="e">\&quot;</span><span class="s"> target=</span><span class="e">\&quot;</span><span class="s">_blank&quot;</span><span class="p">, </span><span class="k">&quot;title&quot;</span><span class="p">: </span><span class="s">&quot;<span class="cj">万</span><span class="cj">科</span>A&quot;</span><span class="p">},</span></div>
<div class="ln" style="left:6px;top:216px;color:#606366">166</div>
<div class="code" style="left:71px;top:216px"><span class="p">{</span><span class="k">&quot;url&quot;</span><span class="p">: </span><span class="s">&quot;http://guba.sina.com.cn/?s=bar&amp;name=%B3%C9%B3%A4%C5%A3%B9%C9</span><span class="e">\&quot;</span><span class="s"> target=</span><span class="e">\&quot;</span><span class="s">_blank&quot;</span><span class="p">, </span><span class="k">&quot;title&quot;</span><span class="p">: </span><span class="s">&quot;<span class="cj">成</span><span class="cj">长</span><span class="cj">牛</span><span class="cj">股</span>&quot;</span><span class="p">},</span></div>
<div class="ln" style="left:6px;top:235px;color:#606366">167</div>
<div class="code" style="left:71px;top:235px"><span class="p">{</span><span class="k">&quot;url&quot;</span><span class="p">: </span><span class="s">&quot;http://guba.sina.com.cn/?s=bar&amp;name=%BC%DB%D6%B5%CD%B6%D7%CA</span><span class="e">\&quot;</span><span class="s"> target=</span><span class="e">\&quot;</span><span class="s">_blank&quot;</span><span class="p">, </span><span class="k">&quot;title&quot;</span><span class="p">: </span><span class="s">&quot;<span class="cj">价</span><span class="cj">值</span><span class="cj">投</span><span class="cj">资</span>&quot;</span><span class="p">},</span></div>
<div class="ln" style="left:6px;top:254px;color:#606366">168</div>
<div class="code" style="left:71px;top:254px"><span class="p">{</span><span class="k">&quot;url&quot;</span><span class="p">: </span><span class="s">&quot;http://guba.sina.com.cn/u/1746704117</span><span class="e">\&quot;</span><span class="s"> target=</span><span class="e">\&quot;</span><span class="s">_blank&quot;</span><span class="p">, </span><span class="k">&quot;title&quot;</span><span class="p">: </span><span class="s">&quot;<span class="cj">科</span><span class="cj">德</span><span class="cj">财</span><span class="cj">经</span>&quot;</span><span class="p">},</span></div>
<div class="ln" style="left:6px;top:273px;color:#606366">169</div>
<div class="code" style="left:71px;top:273px"><span class="p">{</span><span class="k">&quot;url&quot;</span><span class="p">: </span><span class="s">&quot;http://guba.sina.com.cn/u/1168504694</span><span class="e">\&quot;</span><span class="s"> target=</span><span class="e">\&quot;</span><span class="s">_blank&quot;</span><span class="p">, </span><span class="k">&quot;title&quot;</span><span class="p">: </span><span class="s">&quot;<span class="cj">吴</span><span class="cj">国</span><span class="cj">平</span><span class="cj">财</span><span class="cj">经</span>&quot;</span><span class="p">},</span></div>
<div class="ln" style="left:6px;top:292px;color:#606366">170</div>
<div class="code" style="left:71px;top:292px"><span class="p">{</span><span class="k">&quot;url&quot;</span><span class="p">: </span><span class="s">&quot;http://guba.sina.com.cn/u/1661526105</span><span class="e">\&quot;</span><span class="s"> target=</span><span class="e">\&quot;</span><span class="s">_blank&quot;</span><span class="p">, </span><span class="k">&quot;title&quot;</span><span class="p">: </span><span class="s">&quot;<span class="cj">大</span><span class="cj">盘</span><span class="cj">的</span><span class="cj">王</span><span class="cj">者</span>&quot;</span><span class="p">},</span></div>
<div class="ln" style="left:6px;top:311px;color:#606366">171</div>
<div class="code" style="left:71px;top:311px"><span class="p">{</span><span class="k">&quot;url&quot;</span><span class="p">: </span><span class="s">&quot;http://guba.sina.com.cn/u/2244291964</span><span class="e">\&quot;</span><span class="s"> target=</span><span class="e">\&quot;</span><span class="s">_blank&quot;</span><span class="p">, </span><span class="k">&quot;title&quot;</span><span class="p">: </span><span class="s">&quot;<span class="cj">后</span><span class="cj">知</span><span class="cj">后</span><span class="cj">觉</span>&quot;</span><span class="p">},</span></div>
<div class="ln" style="left:6px;top:330px;color:#606366">172</div>
<div class="code" style="left:71px;top:330px"><span class="p">{</span><span class="k">&quot;url&quot;</span><span class="p">: </span><span class="s">&quot;http://guba.sina.com.cn/u/1617732512</span><span class="e">\&quot;</span><span class="s"> target=</span><span class="e">\&quot;</span><span class="s">_blank&quot;</span><span class="p">, </span><span class="k">&quot;title&quot;</span><span class="p">: </span><span class="s">&quot;<span class="cj">淘</span><span class="cj">氣</span><span class="cj">天</span><span class="cj">尊</span>\t&quot;</span><span class="p">},</span></div>
<div class="ln" style="left:6px;top:349px;color:#606366">173</div>
<div class="code" style="left:71px;top:349px"><span class="p">{</span><span class="k">&quot;url&quot;</span><span class="p">: </span><span class="s">&quot;http://guba.sina.com.cn/u/1434387020</span><span class="e">\&quot;</span><span class="s"> target=</span><span class="e">\&quot;</span><span class="s">_blank&quot;</span><span class="p">, </span><span class="k">&quot;title&quot;</span><span class="p">: </span><span class="s">&quot;<span class="cj">王</span><span class="cj">名</span>&quot;</span><span class="p">},</span></div>
<div class="ln" style="left:6px;top:368px;color:#606366">174</div>
<div class="code" style="left:71px;top:368px"><span class="p">{</span><span class="k">&quot;url&quot;</span><span class="p">: </span><span class="s">&quot;http://guba.sina.com.cn/u/5072807994</span><span class="e">\&quot;</span><span class="s"> target=</span><span class="e">\&quot;</span><span class="s">_blank&quot;</span><span class="p">, </span><span class="k">&quot;title&quot;</span><span class="p">: </span><span class="s">&quot;<span class="cj">大</span><span class="cj">满</span><span class="cj">贯</span><span class="cj">股</span>&quot;</span><span class="p">},</span></div>
<div class="ln" style="left:6px;top:387px;color:#606366">175</div>
<div class="code" style="left:71px;top:387px"><span class="p">{</span><span class="k">&quot;url&quot;</span><span class="p">: </span><span class="s">&quot;http://guba.sina.com.cn/u/2892774000</span><span class="e">\&quot;</span><span class="s"> target=</span><span class="e">\&quot;</span><span class="s">_blank&quot;</span><span class="p">, </span><span class="k">&quot;title&quot;</span><span class="p">: </span><span class="s">&quot;<span class="cj">能</span><span class="cj">哥</span><span class="cj">论</span><span class="cj">市</span>&quot;</span><span class="p">},</span></div>
<div class="ln" style="left:6px;top:406px;color:#606366">176</div>
<div class="code" style="left:71px;top:406px"><span class="p">{</span><span class="k">&quot;url&quot;</span><span class="p">: </span><span class="s">&quot;http://guba.sina.com.cn/u/3176871814</span><span class="e">\&quot;</span><span class="s"> target=</span><span class="e">\&quot;</span><span class="s">_blank&quot;</span><span class="p">, </span><span class="k">&quot;title&quot;</span><span class="p">: </span><span class="s">&quot;<span class="cj">狼</span><span class="cj">头</span><span class="cj">看</span><span class="cj">盘</span>&quot;</span><span class="p">},</span></div>
<div class="ln" style="left:6px;top:425px;color:#606366">177</div>
<div class="code" style="left:71px;top:425px"><span class="p">{</span><span class="k">&quot;url&quot;</span><span class="p">: </span><span class="s">&quot;http://guba.sina.com.cn/u/1596872871</span><span class="e">\&quot;</span><span class="s"> target=</span><span class="e">\&quot;</span><span class="s">_blank&quot;</span><span class="p">, </span><span class="k">&quot;title&quot;</span><span class="p">: </span><span class="s">&quot;<span class="cj">先</span><span class="cj">河</span><span class="cj">论</span><span class="cj">市</span>&quot;</span><span class="p">},</span></div>
<div class="ln" style="left:6px;top:444px;color:#606366">178</div>
<div class="code" style="left:71px;top:444px"><span class="p">{</span><span class="k">&quot;url&quot;</span><span class="p">: </span><span class="s">&quot;http://guba.sina.com.cn/u/2676385273</span><span class="e">\&quot;</span><span class="s"> target=</span><span class="e">\&quot;</span><span class="s">_blank&quot;</span><span class="p">, </span><span class="k">&quot;title&quot;</span><span class="p">: </span><span class="s">&quot;<span class="cj">总</span><span class="cj">裁</span><span class="cj">头</span>&quot;</span><span class="p">},</span></div>
<div class="ln" style="left:6px;top:463px;color:#606366">179</div>
<div class="code" style="left:71px;top:463px"><span class="p">{</span><span class="k">&quot;url&quot;</span><span class="p">: </span><span class="s">&quot;http://guba.sina.com.cn/u/1777804832</span><span class="e">\&quot;</span><span class="s"> target=</span><span class="e">\&quot;</span><span class="s">_blank&quot;</span><span class="p">, </span><span class="k">&quot;title&quot;</span><span class="p">: </span><span class="s">&quot;<span class="cj">飞</span><span class="cj">马</span><span class="cj">云</span><span class="cj">天</span>&quot;</span><span class="p">},</span></div>
<div class="ln" style="left:6px;top:482px;color:#a4a3a3">180</div>
<div class="code" style="left:71px;top:482px"><span class="p">{</span><span class="k">&quot;url&quot;</span><span class="p">: </span><span class="s">&quot;http://guba.sina.com.cn/u/2668053584</span><span class="e">\&quot;</span><span class="s"> target=</span><span class="e">\&quot;</span><span class="s">_blank</span><span class="e">\&quot;</span><span class="s"> class=</span><span class="e">\&quot;</span><span class="s">linkRed&quot;</span><span class="p">, </span><span class="k">&quot;title&quot;</span><span class="p">: </span><span class="s">&quot;<span class="cj">题</span><span class="cj">材</span><span class="cj">挖</span><span class="cj">掘</span><span class="cj">机</span>&quot;</span><span class="p">},</span></div>
<div class="ln" style="left:6px;top:501px;color:#606366">181</div>
<div class="code" style="left:71px;top:501px"><span class="p">{</span><span class="k">&quot;url&quot;</span><span class="p">: </span><span class="s">&quot;http://guba.sina.com.cn/u/1581557932</span><span class="e">\&quot;</span><span class="s"> target=</span><span class="e">\&quot;</span><span class="s">_blank&quot;</span><span class="p">, </span><span class="k">&quot;title&quot;</span><span class="p">: </span><span class="s">&quot;<span class="cj">荷</span><span class="cj">叶</span>&quot;</span><span class="p">},</span></div>
<div class="ln" style="left:6px;top:520px;color:#606366">182</div>
<div class="code" style="left:71px;top:520px"><span class="p">{</span><span class="k">&quot;url&quot;</span><span class="p">: </span><span class="s">&quot;http://guba.sina.com.cn/u/1051585232</span><span class="e">\&quot;</span><span class="s"> target=</span><span class="e">\&quot;</span><span class="s">_blank&quot;</span><span class="p">, </span><span class="k">&quot;title&quot;</span><span class="p">: </span><span class="s">&quot;<span class="cj">红</span><span class="cj">狐</span><span class="cj">金</span><span class="cj">短</span><span class="cj">线</span>&quot;</span><span class="p">},</span></div>
<div class="ln" style="left:6px;top:539px;color:#606366">183</div>
<div class="code" style="left:71px;top:539px"><span class="p">{</span><span class="k">&quot;url&quot;</span><span class="p">: </span><span class="s">&quot;http://guba.sina.com.cn/u/1496992150</span><span class="e">\&quot;</span><span class="s"> target=</span><span class="e">\&quot;</span><span class="s">_blank&quot;</span><span class="p">, </span><span class="k">&quot;title&quot;</span><span class="p">: </span><span class="s">&quot;<span class="cj">德</span><span class="cj">财</span><span class="cj">张</span><span class="cj">晖</span>&quot;</span><span class="p">}</span></div>
<div class="ln" style="left:6px;top:558px">184</div>
</div>
<div class="a" style="left:1184px;top:578px;width:2px;height:19px;background:#d8d8d8;"></div>
<div class="a" style="left:564px;top:659px;width:563px;height:8px;background:#4b4b4b;"></div>
<div class="a" style="left:555px;top:650px;width:20px;height:18px;overflow:hidden"><div class="code" style="left:4px;top:7px;color:#c8c8c8">]</div></div>
<svg style="left:548px;top:658px" width="10" height="10" viewBox="0 0 10 10"><path d="M1 3l4-3 4 3v6H1z" fill="#313335" stroke="#6a6d70"/><path d="M3 5.5h4" stroke="#8a8d90"/></svg>
<div class="a" style="left:490px;top:668px;width:841px;height:24px;background:#313335;"></div>
<div class="a" style="left:490px;top:668px;width:841px;height:1px;background:#323232;"></div>
<div class="a ui" style="left:564px;top:673px;">178</div>
<svg style="left:595px;top:674px" width="5" height="14" viewBox="0 0 5 14"><path d="M0 0l4 7-4 7" fill="none" stroke="#5a5d5f" stroke-width="1"/></svg>
<div class="a ui" style="left:608px;top:673px;">title</div>
<div class="a" style="left:16px;top:692px;width:1315px;height:26px;background:#3c3f41;"></div>
<div class="a" style="left:16px;top:692px;width:1315px;height:1px;background:#2f3133;"></div>
<div class="a ui" style="left:24px;top:698px;">Run:</div>
<div class="a" style="left:56px;top:694px;width:74px;height:24px;background:#35383a;"></div>
<svg style="left:67px;top:698px" width="14" height="14" viewBox="0 0 14 14"><path d="M5 0h3a2 2 0 0 1 2 2v4H5a2 2 0 0 0-2 2v1H2a2 2 0 0 1-2-2V5a2 2 0 0 1 2-2h3z" fill="#3f97c6"/><path d="M9 14H6a2 2 0 0 1-2-2V8h5a2 2 0 0 0 2-2V5h1a2 2 0 0 1 2 2v2a2 2 0 0 1-2 2H9z" fill="#e0b83a"/></svg>
<div class="a ui" style="left:87px;top:698px;">run</div>
<svg style="left:112px;top:702px" width="8" height="8" viewBox="0 0 8 8"><path d="M0 0l8 8M8 0L0 8" stroke="#65686a" stroke-width="1.3"/></svg>
<div class="a" style="left:16px;top:718px;width:56px;height:280px;background:#3c3f41;"></div>
<div class="a" style="left:44px;top:718px;width:1px;height:280px;background:#4b4e50;"></div>
<div class="a" style="left:72px;top:718px;width:1259px;height:280px;background:#2b2b2b;"></div>
<svg style="left:25px;top:727px" width="11" height="12" viewBox="0 0 11 12"><path d="M0 0l11 6-11 6z" fill="#59a869"/></svg>
<div class="a" style="left:25px;top:754px;width:11px;height:11px;background:#5d6063;"></div>
<div class="a" style="left:25px;top:779px;width:3px;height:11px;background:#5d6063;"></div>
<div class="a" style="left:31px;top:779px;width:3px;height:11px;background:#5d6063;"></div>
<div class="a" style="left:21px;top:801px;width:20px;height:1px;background:#515457;"></div>
<div class="a" style="left:24px;top:812px;width:6px;height:5px;background:#aeb1b3;"></div>
<div class="a" style="left:31px;top:812px;width:6px;height:5px;background:#aeb1b3;"></div>
<div class="a" style="left:24px;top:818px;width:13px;height:5px;background:#aeb1b3;"></div>
<div class="a" style="left:21px;top:833px;width:20px;height:1px;background:#515457;"></div>
<svg style="left:23px;top:843px" width="14" height="14" viewBox="0 0 14 14"><path d="M7 1l6 6-2 1-3 3-1 2L1 7l2-1 3-3z" fill="#aeb1b3"/><path d="M4 10l-4 4" stroke="#aeb1b3" stroke-width="1.5"/></svg>
<svg style="left:53px;top:726px" width="12" height="14" viewBox="0 0 12 14"><path d="M6 1v13M1 6l5-5 5 5" fill="none" stroke="#aeb1b3" stroke-width="1.8"/></svg>
<svg style="left:53px;top:752px" width="12" height="14" viewBox="0 0 12 14"><path d="M6 0v13M1 8l5 5 5-5" fill="none" stroke="#aeb1b3" stroke-width="1.8"/></svg>
<svg style="left:52px;top:778px" width="14" height="13" viewBox="0 0 14 13"><path d="M0 1.5h14M0 6.5h11a2.5 2.5 0 0 1 0 5H8M0 11.5h4" fill="none" stroke="#aeb1b3" stroke-width="1.6"/><path d="M9 9l-2 2.5 2 2.5" fill="none" stroke="#aeb1b3" stroke-width="1.4"/></svg>
<div class="a" style="left:48px;top:799px;width:22px;height:21px;background:#4c5052;"></div>
<svg style="left:52px;top:802px" width="14" height="14" viewBox="0 0 14 14"><path d="M0 2h5M0 6h5M0 10h5M0 13h14M10 1v9M7 7l3 3 3-3" fill="none" stroke="#aeb1b3" stroke-width="1.6"/></svg>
<svg style="left:52px;top:829px" width="14" height="13" viewBox="0 0 14 13"><path d="M3 0h8v3H3z M0 4h14v6h-3v3H3v-3H0z" fill="#aeb1b3"/><path d="M4 8h6v4H4z" fill="#3c3f41"/></svg>
<svg style="left:53px;top:854px" width="12" height="14" viewBox="0 0 12 14"><path d="M0 2h12M4 0h4M1 4h10v10H1z" fill="#aeb1b3" stroke="#aeb1b3" stroke-width="1"/></svg>
<div class="a" style="left:72px;top:718px;width:1259px;height:280px;overflow:hidden">
<div class="code r" style="left:15px;top:1px">{'title': '<span class="cj">廊</span><span class="cj">坊</span><span class="cj">发</span><span class="cj">展</span>',</div>
<div class="code r" style="left:15px;top:20px"> 'url': '<span class="lnk">http://guba.sina.com.cn/?s=bar&amp;bid=1077</span>&quot; target=&quot;_blank'}</div>
<div class="code r" style="left:15px;top:39px">2019-12-05 21:52:50 [scrapy.core.scraper] DEBUG: Scraped from &lt;200 <span class="lnk">https://finance.sina.com.cn/stock/</span>&gt;</div>
<div class="code r" style="left:15px;top:58px">{'title': '<span class="cj">京</span><span class="cj">东</span><span class="cj">方</span>A',</div>
<div class="code r" style="left:15px;top:77px"> 'url': '<span class="lnk">http://guba.sina.com.cn/?s=bar&amp;name=sz000725</span>&quot; target=&quot;_blank'}</div>
<div class="code r" style="left:15px;top:96px">2019-12-05 21:52:50 [scrapy.core.scraper] DEBUG: Scraped from &lt;200 <span class="lnk">https://finance.sina.com.cn/stock/</span>&gt;</div>
<div class="code r" style="left:15px;top:115px">{'title': '<span class="cj">东</span><span class="cj">旭</span><span class="cj">光</span><span class="cj">电</span>',</div>
<div class="code r" style="left:15px;top:134px"> 'url': '<span class="lnk">http://guba.sina.com.cn/?s=bar&amp;bid=566</span>&quot; target=&quot;_blank'}</div>
<div class="code r" style="left:15px;top:153px">2019-12-05 21:52:50 [scrapy.core.scraper] DEBUG: Scraped from &lt;200 <span class="lnk">https://finance.sina.com.cn/stock/</span>&gt;</div>
<div class="code r" style="left:15px;top:172px">{'title': '<span class="cj">贵</span><span class="cj">州</span><span class="cj">茅</span><span class="cj">台</span>',</div>
<div class="code r" style="left:15px;top:191px"> 'url': '<span class="lnk">http://guba.sina.com.cn/?s=bar&amp;name=sh600519</span>&quot; target=&quot;_blank'}</div>
<div class="code r" style="left:15px;top:210px">2019-12-05 21:52:50 [scrapy.core.scraper] DEBUG: Scraped from &lt;200 <span class="lnk">https://finance.sina.com.cn/stock/</span>&gt;</div>
<div class="code r" style="left:15px;top:229px">{'title': '<span class="cj">山</span><span class="cj">东</span><span class="cj">黄</span><span class="cj">金</span>',</div>
<div class="code r" style="left:15px;top:248px"> 'url': '<span class="lnk">http://guba.sina.com.cn/?s=bar&amp;bid=225</span>&quot; target=&quot;_blank'}</div>
<div class="code r" style="left:15px;top:267px">2019-12-05 21:52:50 [scrapy.core.scraper] DEBUG: Scraped from &lt;200 <span class="lnk">https://finance.sina.com.cn/stock/</span>&gt;</div>
</div>
<div class="a" style="left:88px;top:987px;width:1243px;height:9px;background:rgba(100,100,100,0.55);"></div>
<div class="a" style="left:0px;top:996px;width:1331px;height:22px;background:#3c3f41;"></div>
<div class="a" style="left:0px;top:996px;width:1331px;height:1px;background:#323232;"></div>
<div class="a" style="left:295px;top:997px;width:70px;height:21px;background:#2f3133;"></div>
<svg style="left:29px;top:1003px" width="12" height="12" viewBox="0 0 14 14"><path d="M5 0h3a2 2 0 0 1 2 2v4H5a2 2 0 0 0-2 2v1H2a2 2 0 0 1-2-2V5a2 2 0 0 1 2-2h3z" fill="#afb1b3"/><path d="M9 14H6a2 2 0 0 1-2-2V8h5a2 2 0 0 0 2-2V5h1a2 2 0 0 1 2 2v2a2 2 0 0 1-2 2H9z" fill="#afb1b3"/></svg>
<div class="a ui" style="left:45px;top:1002px;font-size:12px">Python Console</div>
<svg style="left:151px;top:1003px" width="12" height="11" viewBox="0 0 12 11"><rect width="12" height="11" fill="#aeb1b3"/><path d="M2 2l3 2-3 2M6 8h4" stroke="#3c3f41" fill="none" stroke-width="1.2"/></svg>
<div class="a ui" style="left:168px;top:1002px;font-size:12px">Terminal</div>
<svg style="left:234px;top:1002px" width="11" height="12" viewBox="0 0 11 12"><circle cx="4.5" cy="4.5" r="3.5" fill="none" stroke="#aeb1b3" stroke-width="1.8"/><path d="M7 7l3.5 4" stroke="#aeb1b3" stroke-width="2"/></svg>
<div class="a ui" style="left:249px;top:1002px;font-size:12px"><u>3</u>: Find</div>
<svg style="left:306px;top:1003px" width="9" height="11" viewBox="0 0 9 11"><path d="M0 0l9 5.5L0 11z" fill="#aeb1b3"/></svg>
<div class="a ui" style="left:322px;top:1002px;color:#dddddd;font-size:12px"><u>4</u>: Run</div>
<svg style="left:378px;top:1003px" width="10" height="10" viewBox="0 0 10 10"><path d="M0 1h2M0 5h2M0 9h2M3.5 1h6.5M3.5 5h6.5M3.5 9h6.5" stroke="#aeb1b3" stroke-width="1.6"/></svg>
<div class="a ui" style="left:393px;top:1002px;font-size:12px"><u>6</u>: TODO</div>
<div class="a" style="left:0px;top:1018px;width:1331px;height:7px;background:#3c3f41;"></div>
<div class="a" style="left:0px;top:1018px;width:1331px;height:1px;background:#323232;"></div>
<div class="a" style="left:5px;top:1023px;width:10px;height:2px;background:#aeb1b3;"></div>
<div class="a" style="left:26px;top:1024px;width:2px;height:1px;background:#9a9d9f;"></div>
<div class="a" style="left:70px;top:1024px;width:2px;height:1px;background:#9a9d9f;"></div>
<div class="a" style="left:100px;top:1024px;width:2px;height:1px;background:#9a9d9f;"></div>
<div class="a" style="left:131px;top:1024px;width:2px;height:1px;background:#9a9d9f;"></div>
<div class="a" style="left:193px;top:1024px;width:2px;height:1px;background:#9a9d9f;"></div>
<div class="a" style="left:226px;top:1024px;width:2px;height:1px;background:#9a9d9f;"></div>
<div class="a" style="left:263px;top:1024px;width:2px;height:1px;background:#9a9d9f;"></div>
<div class="a" style="left:312px;top:1024px;width:2px;height:1px;background:#9a9d9f;"></div>
<div class="a" style="left:374px;top:1024px;width:2px;height:1px;background:#9a9d9f;"></div>
</body></html>
